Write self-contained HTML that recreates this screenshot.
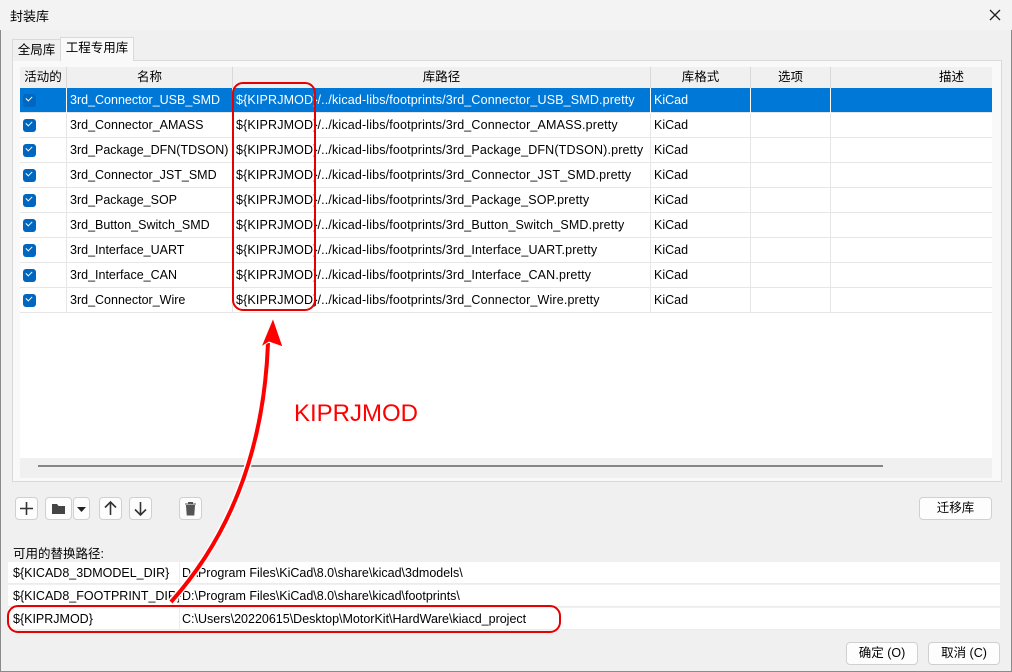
<!DOCTYPE html>
<html><head><meta charset="utf-8"><style>
*{box-sizing:border-box;margin:0;padding:0}
body{width:1012px;height:672px;background:#f0f0f0;font-family:"Liberation Sans","Noto Sans CJK SC",sans-serif;font-size:12.5px;color:#000;position:relative;overflow:hidden}
.abs{position:absolute}
.win{position:absolute;left:0;top:0;width:1012px;height:672px;border:1px solid #8a8a8a;}
.title{left:0;top:0;width:1012px;height:30px;background:#f3f3f3}
.tab{position:absolute;height:22px;line-height:21px;text-align:center;border:1px solid #d9d9d9;border-bottom:none;font-size:12.5px}
.panel{left:12px;top:60px;width:990px;height:422px;border:1px solid #d9d9d9;background:#f9f9f9}
.grid{left:20px;top:67px;width:972px;height:411px;background:#fff}
.row{position:absolute;left:20px;width:972px;height:25px;border-bottom:1px solid #e6e6e6}
.c{position:absolute;top:0;height:25px;line-height:24px;padding-left:3px;border-right:1px solid #e6e6e6;white-space:nowrap;overflow:hidden}
.p{letter-spacing:0.15px}
.hdr .c{text-align:center;padding-left:0;border-right:1px solid #d8d8d8;height:21px;line-height:20px;background:#f0f0f0}
.sel{background:#0078d7;color:#fff}
.sel .c{border-right-color:#fff}
.cb{position:absolute;left:3px;top:6px;width:13px;height:13px;border-radius:3px;background:#0067c0}
.cb:after{content:"";position:absolute;left:3px;top:2px;width:5px;height:3px;border-left:1.5px solid #fff;border-bottom:1.5px solid #fff;transform:rotate(-45deg)}
.btn{position:absolute;height:23px;background:#fdfdfd;border:1px solid #d0d0d0;border-radius:4px;text-align:center;line-height:21px}
.srow{position:absolute;left:8px;width:992px;height:22px;background:#fff;border-bottom:1px solid #ececec}
.srow span{position:absolute;top:0;line-height:22px;white-space:nowrap}
</style></head><body>
<div class="win"></div>
<div class="abs title"></div>
<div class="abs" style="left:10px;top:6px;font-size:13px">封装库</div>
<svg class="abs" style="left:988px;top:8px" width="14" height="14"><path d="M2 2L12 12M12 2L2 12" stroke="#222" stroke-width="1.3"/></svg>

<div class="abs panel"></div>
<div class="tab" style="left:12px;top:39px;width:49px;background:#f0f0f0">全局库</div>
<div class="tab" style="left:60px;top:37px;width:74px;height:24px;background:#f9f9f9">工程专用库</div>

<div class="abs grid"></div>
<div class="row hdr" style="top:67px;height:21px;border-bottom:1px solid #d8d8d8">
<div class="c" style="left:0;width:47px">活动的</div>
<div class="c" style="left:47px;width:166px">名称</div>
<div class="c" style="left:213px;width:418px">库路径</div>
<div class="c" style="left:631px;width:100px">库格式</div>
<div class="c" style="left:731px;width:80px">选项</div>
<div class="c" style="left:811px;width:161px;border-right:none;text-align:left;padding-left:108px">描述</div>
</div>

<div id="rows"></div>
<script>
var names=["3rd_Connector_USB_SMD","3rd_Connector_AMASS","3rd_Package_DFN(TDSON)","3rd_Connector_JST_SMD","3rd_Package_SOP","3rd_Button_Switch_SMD","3rd_Interface_UART","3rd_Interface_CAN","3rd_Connector_Wire"];
var h="";
names.forEach(function(n,i){
h+='<div class="row'+(i==0?' sel':'')+'" style="top:'+(88+i*25)+'px">'+
'<div class="c" style="left:0;width:47px"><div class="cb"></div></div>'+
'<div class="c" style="left:47px;width:166px">'+n+'</div>'+
'<div class="c p" style="left:213px;width:418px">${KIPRJMOD}/../kicad-libs/footprints/'+n+'.pretty</div>'+
'<div class="c" style="left:631px;width:100px">KiCad</div>'+
'<div class="c" style="left:731px;width:80px"></div>'+
'<div class="c" style="left:811px;width:161px;border-right:none"></div></div>';
});
document.getElementById("rows").innerHTML=h;
</script>

<div class="abs" style="left:20px;top:458px;width:972px;height:20px;background:#f0f0f0"></div>
<div class="abs" style="left:38px;top:465px;width:845px;height:2px;background:#858585"></div>

<div class="btn" style="left:15px;top:497px;width:23px"><svg width="21" height="21"><path d="M10.5 4V17M4 10.5H17" stroke="#333" stroke-width="1.6"/></svg></div>
<div class="btn" style="left:45px;top:497px;width:27px"><svg width="25" height="21"><path d="M6 6H11L12.5 8H19V16H6Z" fill="#444"/></svg></div>
<div class="btn" style="left:73px;top:497px;width:17px"><svg width="15" height="21"><path d="M3 9H12L7.5 14Z" fill="#222"/></svg></div>
<div class="btn" style="left:99px;top:497px;width:23px"><svg width="21" height="21"><path d="M10.5 17V4M5 9.5L10.5 4L16 9.5" stroke="#333" stroke-width="1.6" fill="none"/></svg></div>
<div class="btn" style="left:129px;top:497px;width:23px"><svg width="21" height="21"><path d="M10.5 4V17M5 11.5L10.5 17L16 11.5" stroke="#333" stroke-width="1.6" fill="none"/></svg></div>
<div class="btn" style="left:179px;top:497px;width:23px"><svg width="21" height="21"><path d="M5 6H16M8.5 6V4.5H12.5V6M6.5 7.5H14.5L13.8 17H7.2Z" fill="#555" stroke="#555" stroke-width="1"/></svg></div>
<div class="btn" style="left:919px;top:497px;width:73px">迁移库</div>

<div class="abs" style="left:13px;top:543px">可用的替换路径:</div>
<div class="srow" style="top:562px"><span style="left:5px">${KICAD8_3DMODEL_DIR}</span><span style="left:174px">D:\Program Files\KiCad\8.0\share\kicad\3dmodels\</span></div>
<div class="srow" style="top:585px"><span style="left:5px">${KICAD8_FOOTPRINT_DIR}</span><span style="left:174px">D:\Program Files\KiCad\8.0\share\kicad\footprints\</span></div>
<div class="srow" style="top:608px"><span style="left:5px">${KIPRJMOD}</span><span style="left:174px">C:\Users\20220615\Desktop\MotorKit\HardWare\kiacd_project</span></div>
<div class="abs" style="left:179px;top:562px;width:1px;height:68px;background:#ececec"></div>

<div class="btn" style="left:846px;top:642px;width:72px">确定 (O)</div>
<div class="btn" style="left:928px;top:642px;width:72px">取消 (C)</div>

<svg class="abs" style="left:0;top:0" width="1012" height="672">
<rect x="233" y="83" width="82" height="227" rx="10" fill="none" stroke="#e60000" stroke-width="2"/>
<rect x="8" y="606" width="552" height="26" rx="10" fill="none" stroke="#e60000" stroke-width="2"/>
<path d="M171 602Q262 500 268 343" fill="none" stroke="#fff" stroke-width="7"/>
<path d="M171 602Q262 500 268 343" fill="none" stroke="#f00" stroke-width="4"/>
<path d="M273 318L261 347L269 342L283 347Z" fill="#f00" stroke="#fff" stroke-width="1"/>
<text x="294" y="421" fill="#f00" font-family="Liberation Sans,sans-serif" font-size="24">KIPRJMOD</text>
</svg>
</body></html>
